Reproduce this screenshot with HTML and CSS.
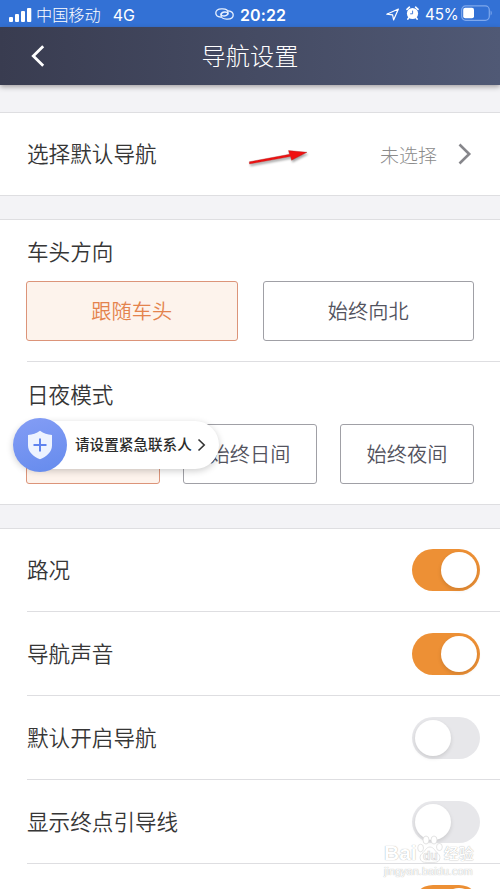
FILE: index.html
```html
<!DOCTYPE html>
<html lang="zh-CN">
<head>
<meta charset="utf-8">
<title>导航设置</title>
<link rel="stylesheet" href="styles.css">
</head>
<body>
<div class="screen">
  <div class="status">
    <div class="status-left">
      <svg class="signal" width="23" height="15" viewBox="0 0 23 15" fill="#fff"><rect x="0" y="10" width="4" height="5" rx="1"/><rect x="6" y="7" width="4" height="8" rx="1"/><rect x="12" y="4" width="4" height="11" rx="1"/><rect x="18" y="1" width="4.3" height="14" rx="1"/></svg>
      <span class="carrier">中国移动</span><span class="network">4G</span>
    </div>
    <div class="status-time">
      <svg width="19" height="12" viewBox="0 0 19 12" fill="none" stroke="#e7f0ff" stroke-width="1.3" stroke-linecap="round"><path d="M5.600 9.200C2.600 8.800.8 7.200.8 5 .8 2.600 3 .9 6.400.9h1.200c3.200 0 5.400 1.500 5.400 3.700S11.200 8 9.200 8C7.200 8 6 7.200 6 5.900"/><path d="M13.400 2.800c3 .4 4.800 2 4.800 4.200 0 2.400-2.200 4.100-5.600 4.100h-1.200C8.200 11.100 6 9.600 6 7.400S7.800 4 9.800 4C11.800 4 13 4.800 13 6.100"/></svg>
      <span>20:22</span>
    </div>
    <div class="status-right">
      <svg class="locate" width="14" height="13" viewBox="0 0 14 13" fill="none" stroke="#fff" stroke-width="1.200" stroke-linejoin="round"><path d="M.8 6.200 12.400 1 7.600 12 6.600 6.800Z"/></svg>
      <svg class="alarm" width="13" height="14" viewBox="0 0 13 14"><circle cx="6.500" cy="7.500" r="5.600" fill="#fff"/><path d="M1 3.400 3.400 1.200M12 3.400 9.600 1.200M2.700 12 1.900 13M10.300 12l.8 1" stroke="#fff" stroke-width="1.700" stroke-linecap="round"/><path d="M6.600 4.600v3.200H4.200" fill="none" stroke="#3371d5" stroke-width=".9"/></svg>
      <span class="percent">45%</span>
      <svg class="battery" width="31" height="17" viewBox="0 0 31 17"><rect x=".7" y=".9" width="27.600" height="14.400" rx="4" fill="none" stroke="#7fa8ec" stroke-width="1.200"/><rect x="2.200" y="2.800" width="10.800" height="10.500" rx="2" fill="#fff"/><path d="M29.600 5.600c1.500.7 1.500 4.300 0 5Z" fill="#7fa8ec"/></svg>
    </div>
  </div>
  <header class="header">
    <svg class="back" width="14" height="22" viewBox="0 0 14 22" fill="none" stroke="#fff" stroke-width="2.800"><path d="M12.200 1.200 2.300 11l9.900 9.800"/></svg>
    <h1>导航设置</h1>
  </header>

  <section class="card choose">
    <span class="label">选择默认导航</span>
    <svg class="pointer" width="62" height="20" viewBox="0 0 62 20"><path d="M1.300 13.800 41.500 6.300 40.500 2.600 59 4.300 43.600 12.200 42.500 8.500 1.500 16Z" fill="#f01010" stroke="#a83030" stroke-width=".4"/></svg>
    <span class="value">未选择</span>
    <svg class="more" width="14" height="22" viewBox="0 0 14 22" fill="none" stroke="#86868b" stroke-width="2.600"><path d="M1.500 1.500 11.200 11l-9.700 9.500"/></svg>
  </section>

  <section class="card modes">
    <div class="group">
      <h2 class="label">车头方向</h2>
      <div class="options two">
        <div class="option selected">跟随车头</div>
        <div class="option">始终向北</div>
      </div>
    </div>
    <div class="group last">
      <h2 class="label">日夜模式</h2>
      <div class="options three">
        <div class="option selected"></div>
        <div class="option">始终日间</div>
        <div class="option">始终夜间</div>
      </div>
      <div class="contact">
        <span class="badge"><svg width="26" height="30" viewBox="0 0 26 30"><path d="M13 .8C16.600 3.500 20.500 4.400 25 5v10.500c0 6.500-5.500 11.200-12 13.700C6.500 26.700 1 22 1 15.500V5C5.500 4.400 9.400 3.500 13 .8Z" fill="#edf3ff"/><path d="M13 8.500v13M6.500 15h13" stroke="#5f83ef" stroke-width="2"/></svg></span>
        <span class="contact-text">请设置紧急联系人</span>
        <svg class="tiny" width="9" height="14" viewBox="0 0 9 14" fill="none" stroke="#333" stroke-width="1.600"><path d="m1.500 1.500 5.700 5.500-5.700 5.500"/></svg>
      </div>
    </div>
  </section>

  <section class="card switches">
    <div class="row"><span class="label">路况</span><i class="switch on"></i></div>
    <div class="row"><span class="label">导航声音</span><i class="switch on"></i></div>
    <div class="row"><span class="label">默认开启导航</span><i class="switch"></i></div>
    <div class="row"><span class="label">显示终点引导线</span><i class="switch"></i></div>
    <div class="row"><span class="label"></span><i class="switch on"></i></div>
  </section>

  <div class="watermark">
    <div class="brand"><span>Bai</span><svg width="26" height="29" viewBox="0 0 26 29" fill="#fff" stroke="#d8d8d8" stroke-width=".7"><ellipse cx="3.600" cy="13" rx="2.900" ry="3.800"/><ellipse cx="9" cy="5" rx="3" ry="4"/><ellipse cx="17" cy="5" rx="3" ry="4"/><ellipse cx="22.400" cy="12" rx="2.900" ry="3.600"/><path d="M13 12c4 0 5 4.500 8 6.500 3.500 3 2 8.500-2.500 8.800-3 .2-8 .2-11 0C3 27 1.500 21.500 5 18.500 8 16.500 9 12 13 12Z"/><text x="6" y="25" font-size="12" font-weight="bold">du</text></svg><span class="cn">经验</span></div>
    <div class="url">jingyan.baidu.com</div>
  </div>
</div>
</body>
</html>
```
FILE: styles.css
```css
* { box-sizing: border-box; }
body {
  margin: 0;
  background: #fff;
  font-family: "Noto Sans CJK SC", sans-serif;
}
svg { display: block; flex: none; overflow: visible; }
.screen {
  position: relative;
  width: 500px;
  height: 889px;
  overflow: hidden;
  background: #f3f3f6;
  display: flex;
  flex-direction: column;
}
.status {
  flex: none;
  height: 27px;
  padding: 0 6px 1px 9px;
  background: #3371d5;
  color: #fff;
  display: grid;
  grid-template-columns: 206px 130px 1fr;
  align-items: center;
  font: 17px/26px Inter, "Noto Sans CJK SC", sans-serif;
}
.status-left, .status-time, .status-right { display: flex; align-items: center; }
.signal { margin: 0 4px 0 0; }
.carrier { margin-top: -1px; font: 300 16.200px/26px "Noto Sans CJK SC", sans-serif; }
.network { margin: 1px 0 0 12px; font-size: 16px; }
.status-time { gap: 6px; font-weight: 600; font-size: 16px; letter-spacing: .1px; }
.status-time span { margin-top: 1px; }
.locate { margin-left: 41px; }
.alarm { margin: -2px 0 0 6px; }
.percent { margin: 2px 0 0 6px; width: 33px; font-size: 15.200px; letter-spacing: -.1px; }
.battery { margin: -1px 0 0 3px; }
.header {
  flex: none;
  position: relative;
  z-index: 1;
  height: 58px;
  padding: 0 31px;
  display: grid;
  grid-template-columns: 40px 1fr 40px;
  align-items: center;
  background: linear-gradient(90deg, #393c50, #505975);
  box-shadow: 0 2px 5px rgba(50, 40, 40, .4);
}
.header h1 {
  margin: -1px 0 1px;
  text-align: center;
  color: #fff;
  font-size: 24.200px;
  font-weight: 300;
  line-height: 36px;
}
.card {
  flex: none;
  background: #fff;
  border-top: 1px solid #dedee1;
  border-bottom: 1px solid #dedee1;
}
.label {
  margin: -1px 0 1px;
  color: #363636;
  font-size: 21.600px;
  font-weight: 350;
  line-height: 32px;
}
.choose {
  margin-top: 27px;
  height: 84px;
  padding: 0 28px 0 27px;
  display: flex;
  align-items: center;
}
.pointer { margin: 7px 0 0 91px; filter: drop-shadow(1px 2px 1px rgba(0, 0, 0, .35)); }
.value { margin-left: auto; color: #8c8c8c; font-size: 19px; font-weight: 300; }
.more { margin-left: 21px; }
.modes { margin-top: 23px; height: 286px; }
.group { margin-left: 27px; padding: 16px 27px 0 0; height: 142px; border-bottom: 1px solid #dedee1; }
.last { position: relative; border-bottom: 0; padding-top: 17px; }
.options { display: grid; margin: 14px -1px 0 -1px; }
.two { grid-template-columns: 1fr 1fr; gap: 25px; }
.three { grid-template-columns: 1fr 1fr 1fr; gap: 23px; }
.option {
  height: 60px;
  border: 1px solid #a0a0a6;
  border-radius: 3px;
  color: #53535e;
  font-size: 20.200px;
  font-weight: 350;
  line-height: 58px;
  text-align: center;
}
.selected { background: #fdf3ec; border-color: #dc9479; color: #e4834d; }
.contact {
  position: absolute;
  left: -14px;
  top: 59px;
  width: 206px;
  height: 48px;
  border-radius: 27px;
  background: #fff;
  box-shadow: 0 2px 7px rgba(0, 0, 0, .2);
  display: flex;
  align-items: center;
  color: #2b2b2b;
  font-size: 14.600px;
  font-weight: 500;
}
.contact-text { margin-top: -3px; }
.badge {
  width: 54px;
  height: 54px;
  margin-right: 8px;
  border-radius: 50%;
  background: linear-gradient(165deg, #849df5, #658bed);
  display: flex;
  align-items: center;
  justify-content: center;
}
.tiny { margin-left: 5px; }
.switches { margin-top: 23px; border-bottom: 0; }
.row {
  margin-left: 27px;
  height: 84px;
  padding-right: 20px;
  display: flex;
  align-items: center;
  justify-content: space-between;
  border-bottom: 1px solid #dedee1;
}
.row:first-child { height: 83px; }
.switch { width: 68px; height: 42px; padding: 3px; border-radius: 21px; background: #e7e7ea; display: flex; }
.switch::before {
  content: "";
  width: 36px;
  height: 36px;
  border-radius: 50%;
  background: #fff;
  box-shadow: 0 2px 4px rgba(0, 0, 0, .12);
}
.on { justify-content: flex-end; background: #ed9035; }
.watermark {
  position: absolute;
  left: 384px;
  top: 834px;
  color: #fff;
  font-family: "Liberation Sans", sans-serif;
  text-shadow: 0 0 1px #999;
}
.brand { display: flex; align-items: flex-end; height: 30px; font-size: 21px; line-height: 22px; font-weight: bold; }
.brand svg { text-shadow: none; }
.cn { margin-left: 1px; font: 500 15px/22px "Noto Sans CJK SC", sans-serif; }
.url { margin-top: 1px; font-size: 11px; line-height: 13px; }
```
